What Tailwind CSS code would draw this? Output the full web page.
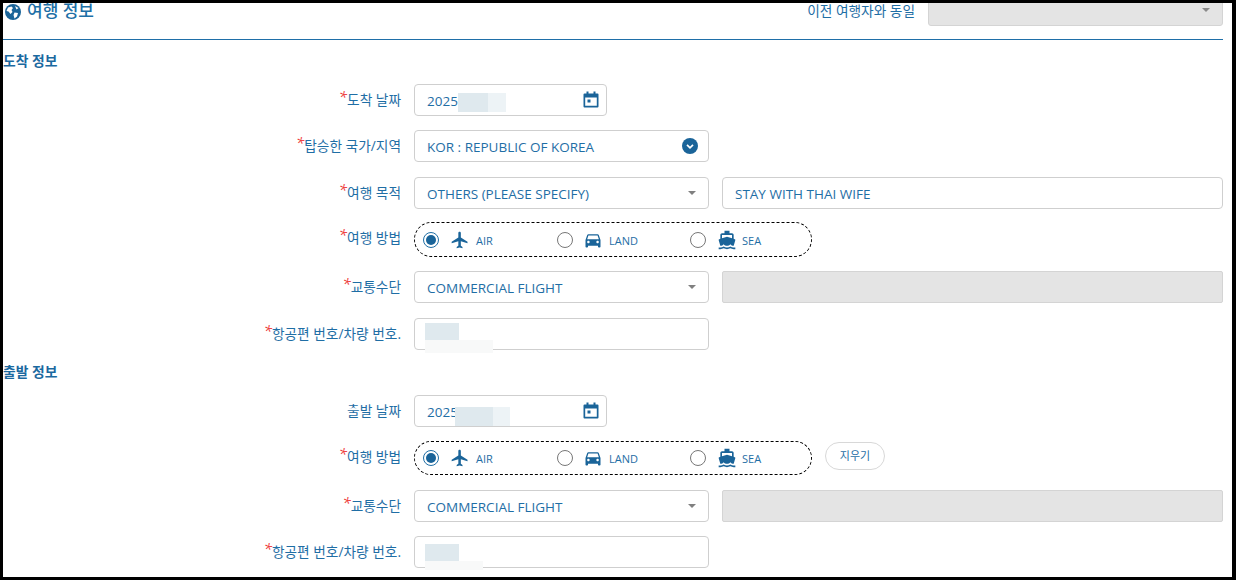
<!DOCTYPE html>
<html lang="ko">
<head>
  <meta charset="UTF-8" />
  <title>여행 정보</title>
  <script src="https://cdn.jsdelivr.net/npm/@tailwindcss/browser@4"></script>
</head>
<body class="h-[580px] w-[1236px] overflow-hidden bg-black pt-[3px] pl-[3px] pr-[4px] pb-[3px] font-['Open_Sans','Noto_Sans_CJK_KR',sans-serif] text-[13.5px] text-[#1f6ea5]">
  <div class="h-full overflow-hidden bg-white">

    <!-- Header -->
    <div class="mr-[9px] flex h-[37px] items-start justify-between border-b border-[#1f6fa8]">
      <div class="-mt-[4px] flex items-center gap-[6px]">
        <svg class="mt-[1px] ml-[2px] h-[16px] w-[16px]" viewBox="0 0 16 16"><circle cx="8" cy="8" r="8" fill="#1a6499"/><path d="M3 3.500 6.500 2.500 8 4 6.500 6 7.500 8 5.500 10 3.500 7.500 1.500 7zM9.500 8.500 13 9 12 12.500 9.500 14.500 8.500 11zM10 2 13.500 4 11.500 5.500z" fill="#fff"/></svg>
        <span class="text-[17px] leading-[24px] font-medium text-[#1d6fa6]">여행 정보</span>
      </div>
      <div class="flex items-start">
        <span class="mr-[13px] text-[13.7px] leading-[15px]">이전 여행자와 동일</span>
        <div class="-mt-[10px] flex h-[33px] w-[295px] items-center justify-end rounded-[3px] border border-[#d4d4d4] bg-[#e4e4e4] pr-[12px]">
          <span class="h-0 w-0 border-x-[4px] border-t-[4px] border-x-transparent border-t-[#8a8a8a]"></span>
        </div>
      </div>
    </div>

    <!-- Arrival -->
    <h3 class="mt-[12px] mb-[14px] text-[13.8px] leading-[18px] font-semibold text-[#1b699f]">도착 정보</h3>

    <div class="flex h-[32px]">
      <label class="w-[398px] pb-[7px] text-right text-[13.7px] leading-[32px]"><i class="relative -top-[3px] text-[15px] leading-[0] text-[#ee3b3b]">*</i>도착 날짜</label>
      <div class="relative ml-[13px] flex w-[193px] items-center justify-between rounded-[4px] border border-[#cfcfcf] px-[12px]">
        <span class="pt-[2px]">2025</span>
        <svg class="-mt-[1px] -mr-[5px] h-[17px] w-[16px]" viewBox="0 0 16 17"><path d="M1.500 2.500h13a1 1 0 0 1 1 1v12a1 1 0 0 1-1 1h-13a1 1 0 0 1-1-1v-12a1 1 0 0 1 1-1zM2.200 6.500v8.300h11.600V6.500z" fill="#1a6499" fill-rule="evenodd"/><rect x="3.500" y="0.500" width="2" height="3" fill="#1a6499"/><rect x="10.500" y="0.500" width="2" height="3" fill="#1a6499"/><rect x="4.500" y="8.500" width="3" height="3" fill="#1a6499"/></svg>
        <span class="absolute top-[8px] left-[43px] h-[19px] w-[30px] bg-[#dfe9ee]"></span>
        <span class="absolute top-[8px] left-[73px] h-[19px] w-[18px] bg-[#edf3f6]"></span>
      </div>
    </div>

    <div class="mt-[14px] flex h-[32px]">
      <label class="w-[398px] pb-[7px] text-right text-[13.7px] leading-[32px]"><i class="relative -top-[3px] text-[15px] leading-[0] text-[#ee3b3b]">*</i>탑승한 국가/지역</label>
      <div class="ml-[13px] flex w-[295px] items-center justify-between rounded-[4px] border border-[#cfcfcf] pr-[10px] pl-[12px]">
        <span class="pt-[2px]">KOR : REPUBLIC OF KOREA</span>
        <svg class="h-[16px] w-[16px]" viewBox="0 0 16 16"><circle cx="8" cy="8" r="8" fill="#1a6499"/><path d="M5 6.800 8 9.800 11 6.800" fill="none" stroke="#fff" stroke-width="1.700"/></svg>
      </div>
    </div>

    <div class="mt-[15px] flex h-[32px]">
      <label class="w-[398px] pb-[7px] text-right text-[13.7px] leading-[32px]"><i class="relative -top-[3px] text-[15px] leading-[0] text-[#ee3b3b]">*</i>여행 목적</label>
      <div class="ml-[13px] flex w-[295px] items-center justify-between rounded-[4px] border border-[#cfcfcf] pr-[12px] pl-[12px]">
        <span class="pt-[2px]">OTHERS (PLEASE SPECIFY)</span>
        <span class="h-0 w-0 border-x-[4px] border-t-[4px] border-x-transparent border-t-[#808080]"></span>
      </div>
      <div class="ml-[13px] flex w-[501px] items-center rounded-[4px] border border-[#cfcfcf] px-[12px] pt-[2px]">STAY WITH THAI WIFE</div>
    </div>

    <div class="mt-[13px] flex h-[35px]">
      <label class="w-[398px] pb-[7px] text-right text-[13.7px] leading-[32px]"><i class="relative -top-[3px] text-[15px] leading-[0] text-[#ee3b3b]">*</i>여행 방법</label>
      <div class="ml-[13px] flex w-[398px] items-center rounded-full border border-dashed border-black pl-[8px] text-[11px]">
        <div class="flex w-[134px] items-center">
          <span class="flex h-[16px] w-[16px] items-center justify-center rounded-full border border-[#1f6ea5]"><span class="h-[10px] w-[10px] rounded-full bg-[#1a6499]"></span></span>
          <svg class="ml-[11px] h-[20px] w-[20px]" viewBox="0 0 24 24" fill="#1a6499"><path d="M21 16v-2l-8-5V3.500c0-.83-.67-1.500-1.500-1.500S10 2.670 10 3.500V9l-8 5v2l8-2.500V19l-2 1.500V22l3.500-1 3.500 1v-1.500L13 19v-5.500l8 2.500z"/></svg>
          <span class="ml-[6px] pt-[3px]">AIR</span>
        </div>
        <div class="flex w-[133px] items-center">
          <span class="h-[16px] w-[16px] rounded-full border border-[#777]"></span>
          <svg class="ml-[10px] h-[20px] w-[20px]" viewBox="0 0 24 24" fill="#1a6499"><path d="M18.920 6.010C18.720 5.420 18.160 5 17.500 5h-11c-.66 0-1.210.42-1.420 1.010L3 12v8c0 .55.45 1 1 1h1c.55 0 1-.45 1-1v-1h12v1c0 .55.45 1 1 1h1c.55 0 1-.45 1-1v-8l-2.080-5.990zM6.500 16c-.83 0-1.500-.67-1.500-1.500S5.670 13 6.500 13s1.500.67 1.500 1.500S7.330 16 6.500 16zm11 0c-.83 0-1.500-.67-1.500-1.500s.67-1.500 1.500-1.500 1.500.67 1.500 1.500-.67 1.500-1.500 1.500zM5 11l1.500-4.500h11L19 11H5z"/></svg>
          <span class="ml-[6px] pt-[3px]">LAND</span>
        </div>
        <div class="flex items-center">
          <span class="h-[16px] w-[16px] rounded-full border border-[#777]"></span>
          <svg class="ml-[11px] h-[20px] w-[20px]" viewBox="0 0 24 24" fill="#1a6499"><path d="M20 21c-1.390 0-2.780-.47-4-1.320-2.440 1.710-5.560 1.710-8 0C6.780 20.530 5.390 21 4 21H2v2h2c1.380 0 2.740-.35 4-.99 2.520 1.290 5.480 1.290 8 0 1.260.65 2.620.99 4 .99h2v-2h-2zM3.950 19H4c1.600 0 3.020-.88 4-2 .98 1.120 2.400 2 4 2s3.020-.88 4-2c.98 1.120 2.400 2 4 2h.05l1.890-6.680c.08-.26.06-.54-.06-.78s-.34-.42-.6-.5L20 10.620V6c0-1.100-.9-2-2-2h-3V1H9v3H6c-1.100 0-2 .9-2 2v4.620l-1.290.42c-.26.08-.48.26-.6.5s-.15.52-.06.78L3.950 19zM6 6h12v3.970L12 8 6 9.970V6z"/></svg>
          <span class="ml-[5px] pt-[3px]">SEA</span>
        </div>
      </div>
    </div>

    <div class="mt-[14px] flex h-[32px]">
      <label class="w-[398px] pb-[7px] text-right text-[13.7px] leading-[32px]"><i class="relative -top-[3px] text-[15px] leading-[0] text-[#ee3b3b]">*</i>교통수단</label>
      <div class="ml-[13px] flex w-[295px] items-center justify-between rounded-[4px] border border-[#cfcfcf] px-[12px]">
        <span class="pt-[2px]">COMMERCIAL FLIGHT</span>
        <span class="h-0 w-0 border-x-[4px] border-t-[4px] border-x-transparent border-t-[#808080]"></span>
      </div>
      <div class="ml-[13px] w-[501px] rounded-[2px] border border-[#d4d4d4] bg-[#e4e4e4]"></div>
    </div>

    <div class="mt-[15px] flex h-[32px]">
      <label class="w-[398px] pb-[7px] text-right text-[13.7px] leading-[32px]"><i class="relative -top-[3px] text-[15px] leading-[0] text-[#ee3b3b]">*</i>항공편 번호/차량 번호.</label>
      <div class="relative ml-[13px] w-[295px] rounded-[4px] border border-[#cfcfcf]">
        <span class="absolute top-[4px] left-[10px] h-[17px] w-[34px] bg-[#dfe9ee]"></span>
        <span class="absolute top-[21px] left-[10px] h-[13px] w-[68px] bg-[#f8f9f9]"></span>
      </div>
    </div>

    <!-- Departure -->
    <h3 class="mt-[13px] mb-[14px] text-[13.8px] leading-[18px] font-semibold text-[#1b699f]">출발 정보</h3>

    <div class="flex h-[32px]">
      <label class="w-[398px] pb-[7px] text-right text-[13.7px] leading-[32px]">출발 날짜</label>
      <div class="relative ml-[13px] flex w-[193px] items-center justify-between rounded-[4px] border border-[#cfcfcf] px-[12px]">
        <span class="pt-[2px]">2025</span>
        <svg class="-mt-[1px] -mr-[5px] h-[17px] w-[16px]" viewBox="0 0 16 17"><path d="M1.500 2.500h13a1 1 0 0 1 1 1v12a1 1 0 0 1-1 1h-13a1 1 0 0 1-1-1v-12a1 1 0 0 1 1-1zM2.200 6.500v8.300h11.600V6.500z" fill="#1a6499" fill-rule="evenodd"/><rect x="3.500" y="0.500" width="2" height="3" fill="#1a6499"/><rect x="10.500" y="0.500" width="2" height="3" fill="#1a6499"/><rect x="4.500" y="8.500" width="3" height="3" fill="#1a6499"/></svg>
        <span class="absolute top-[11px] left-[40px] h-[19px] w-[38px] bg-[#dfe9ee]"></span>
        <span class="absolute top-[11px] left-[78px] h-[19px] w-[17px] bg-[#edf3f6]"></span>
      </div>
    </div>

    <div class="mt-[14px] flex h-[34px]">
      <label class="w-[398px] pb-[7px] text-right text-[13.7px] leading-[32px]"><i class="relative -top-[3px] text-[15px] leading-[0] text-[#ee3b3b]">*</i>여행 방법</label>
      <div class="ml-[13px] flex w-[398px] items-center rounded-full border border-dashed border-black pl-[8px] text-[11px]">
        <div class="flex w-[134px] items-center">
          <span class="flex h-[16px] w-[16px] items-center justify-center rounded-full border border-[#1f6ea5]"><span class="h-[10px] w-[10px] rounded-full bg-[#1a6499]"></span></span>
          <svg class="ml-[11px] h-[20px] w-[20px]" viewBox="0 0 24 24" fill="#1a6499"><path d="M21 16v-2l-8-5V3.500c0-.83-.67-1.500-1.500-1.500S10 2.670 10 3.500V9l-8 5v2l8-2.500V19l-2 1.500V22l3.500-1 3.500 1v-1.500L13 19v-5.500l8 2.500z"/></svg>
          <span class="ml-[6px] pt-[3px]">AIR</span>
        </div>
        <div class="flex w-[133px] items-center">
          <span class="h-[16px] w-[16px] rounded-full border border-[#777]"></span>
          <svg class="ml-[10px] h-[20px] w-[20px]" viewBox="0 0 24 24" fill="#1a6499"><path d="M18.920 6.010C18.720 5.420 18.160 5 17.500 5h-11c-.66 0-1.210.42-1.420 1.010L3 12v8c0 .55.45 1 1 1h1c.55 0 1-.45 1-1v-1h12v1c0 .55.45 1 1 1h1c.55 0 1-.45 1-1v-8l-2.080-5.990zM6.500 16c-.83 0-1.500-.67-1.500-1.500S5.670 13 6.500 13s1.500.67 1.500 1.500S7.330 16 6.500 16zm11 0c-.83 0-1.500-.67-1.500-1.500s.67-1.500 1.500-1.500 1.500.67 1.500 1.500-.67 1.500-1.500 1.500zM5 11l1.500-4.500h11L19 11H5z"/></svg>
          <span class="ml-[6px] pt-[3px]">LAND</span>
        </div>
        <div class="flex items-center">
          <span class="h-[16px] w-[16px] rounded-full border border-[#777]"></span>
          <svg class="ml-[11px] h-[20px] w-[20px]" viewBox="0 0 24 24" fill="#1a6499"><path d="M20 21c-1.390 0-2.780-.47-4-1.320-2.440 1.710-5.560 1.710-8 0C6.780 20.530 5.390 21 4 21H2v2h2c1.380 0 2.740-.35 4-.99 2.520 1.290 5.480 1.290 8 0 1.260.65 2.620.99 4 .99h2v-2h-2zM3.950 19H4c1.600 0 3.020-.88 4-2 .98 1.120 2.400 2 4 2s3.020-.88 4-2c.98 1.120 2.400 2 4 2h.05l1.890-6.680c.08-.26.06-.54-.06-.78s-.34-.42-.6-.5L20 10.620V6c0-1.100-.9-2-2-2h-3V1H9v3H6c-1.100 0-2 .9-2 2v4.620l-1.290.42c-.26.08-.48.26-.6.5s-.15.52-.06.78L3.950 19zM6 6h12v3.970L12 8 6 9.970V6z"/></svg>
          <span class="ml-[5px] pt-[3px]">SEA</span>
        </div>
      </div>
      <button class="mt-[1px] ml-[13px] h-[28px] w-[60px] rounded-full border border-[#d8d8d8] text-[11px]">지우기</button>
    </div>

    <div class="mt-[15px] flex h-[32px]">
      <label class="w-[398px] pb-[7px] text-right text-[13.7px] leading-[32px]"><i class="relative -top-[3px] text-[15px] leading-[0] text-[#ee3b3b]">*</i>교통수단</label>
      <div class="ml-[13px] flex w-[295px] items-center justify-between rounded-[4px] border border-[#cfcfcf] px-[12px]">
        <span class="pt-[2px]">COMMERCIAL FLIGHT</span>
        <span class="h-0 w-0 border-x-[4px] border-t-[4px] border-x-transparent border-t-[#808080]"></span>
      </div>
      <div class="ml-[13px] w-[501px] rounded-[2px] border border-[#d4d4d4] bg-[#e4e4e4]"></div>
    </div>

    <div class="mt-[14px] flex h-[32px]">
      <label class="w-[398px] pb-[7px] text-right text-[13.7px] leading-[32px]"><i class="relative -top-[3px] text-[15px] leading-[0] text-[#ee3b3b]">*</i>항공편 번호/차량 번호.</label>
      <div class="relative ml-[13px] w-[295px] rounded-[4px] border border-[#cfcfcf]">
        <span class="absolute top-[7px] left-[10px] h-[17px] w-[34px] bg-[#dfe9ee]"></span>
        <span class="absolute top-[24px] left-[10px] h-[9px] w-[58px] bg-[#f8f9f9]"></span>
      </div>
    </div>
  </div>
</body>
</html>
